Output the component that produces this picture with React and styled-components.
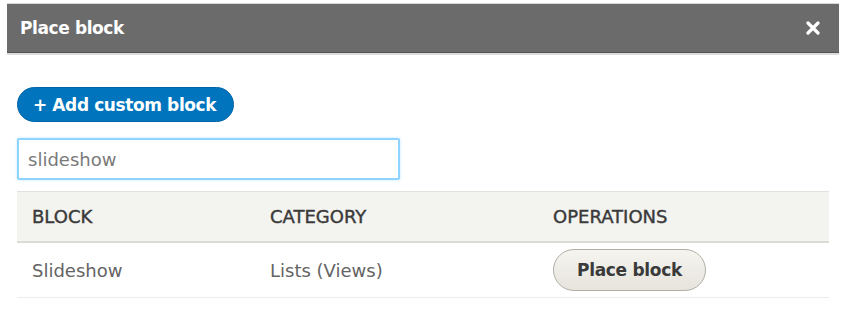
import React from 'react';
import styled, { createGlobalStyle } from 'styled-components';

const GlobalStyle = createGlobalStyle`
	body {
		margin: 0;
		background: #fff;
		font-family: "DejaVu Sans", Verdana, sans-serif;
	}
`;

const Dialog = styled.div`
	width: 832px;
	margin: 3px 0 0 7px;
`;

const TitleBar = styled.div`
	display: flex;
	align-items: center;
	justify-content: space-between;
	height: 50px;
	padding: 0 19px 0 13px;
	background: #6b6b6b;
	border-top: 1px solid #d8d8d8;
	border-bottom: 1px solid #555;
	box-shadow: 0 2px 0 #dcdcdc;
	box-sizing: border-box;
`;

const Title = styled.h1`
	margin: 0;
	color: #fff;
	font-size: 17px;
	font-weight: bold;
	letter-spacing: -0.4px;
`;

const Close = styled.svg`
	width: 14px;
	height: 14px;
	margin-top: -1px;
`;

const Content = styled.div`
	display: flex;
	flex-direction: column;
	align-items: flex-start;
	padding: 34px 10px 0;
`;

const AddButton = styled.button`
	height: 35px;
	padding: 0 17px 0 15px;
	border: 1px solid #0064a6;
	border-radius: 18px;
	background: #0074bd;
	color: #fff;
	font-family: inherit;
	font-size: 17px;
	font-weight: bold;
	letter-spacing: -0.4px;
`;

const Search = styled.input`
	width: 383px;
	height: 42px;
	margin-top: 16px;
	padding: 0 9px;
	box-sizing: border-box;
	border: 2px solid #8fd3ff;
	border-radius: 2px;
	box-shadow: 0 0 3px #bfe6ff;
	font-family: inherit;
	font-size: 18px;
	color: #7a7a7a;
	outline: none;
`;

const Table = styled.div`
	width: 100%;
	margin-top: 11px;
`;

const Row = styled.div`
	display: grid;
	grid-template-columns: 238px 283px 1fr;
	align-items: center;
	height: ${p => (p.$head ? '49px' : '54px')};
	background: ${p => (p.$head ? '#f3f3ef' : '#fff')};
	border-top: ${p => (p.$head ? '1px solid #e2e2dc' : 'none')};
	border-bottom: ${p => (p.$head ? '2px solid #dcdcd6' : '1px solid #ececea')};
`;

const Cell = styled.div`
	padding-left: 15px;
	font-size: 18px;
	color: ${p => (p.$head ? '#3a3a3a' : '#646464')};
	text-transform: ${p => (p.$head ? 'uppercase' : 'none')};
	-webkit-text-stroke: ${p => (p.$head ? '0.4px #3a3a3a' : '0')};
`;

const PlaceButton = styled.button`
	width: 153px;
	height: 42px;
	border: 1px solid #b0b0a8;
	border-radius: 21px;
	background: linear-gradient(#f5f4ef, #e6e4dc);
	color: #3a3a3a;
	font-family: inherit;
	font-size: 17px;
	font-weight: bold;
	letter-spacing: -0.3px;
`;

const App = () => {
	return (
		<>
			<GlobalStyle />
			<Dialog>
				<TitleBar>
					<Title>Place block</Title>
					<Close viewBox="0 0 14 14">
						<path d="M2 2 L12 12 M12 2 L2 12" stroke="#fff" strokeWidth="3.2" strokeLinecap="round" />
					</Close>
				</TitleBar>
				<Content>
					<AddButton>+ Add custom block</AddButton>
					<Search defaultValue="slideshow" />
					<Table>
						<Row $head>
							<Cell $head>Block</Cell>
							<Cell $head>Category</Cell>
							<Cell $head>Operations</Cell>
						</Row>
						<Row>
							<Cell>Slideshow</Cell>
							<Cell>Lists (Views)</Cell>
							<Cell>
								<PlaceButton>Place block</PlaceButton>
							</Cell>
						</Row>
					</Table>
				</Content>
			</Dialog>
		</>
	);
};

export default App;
